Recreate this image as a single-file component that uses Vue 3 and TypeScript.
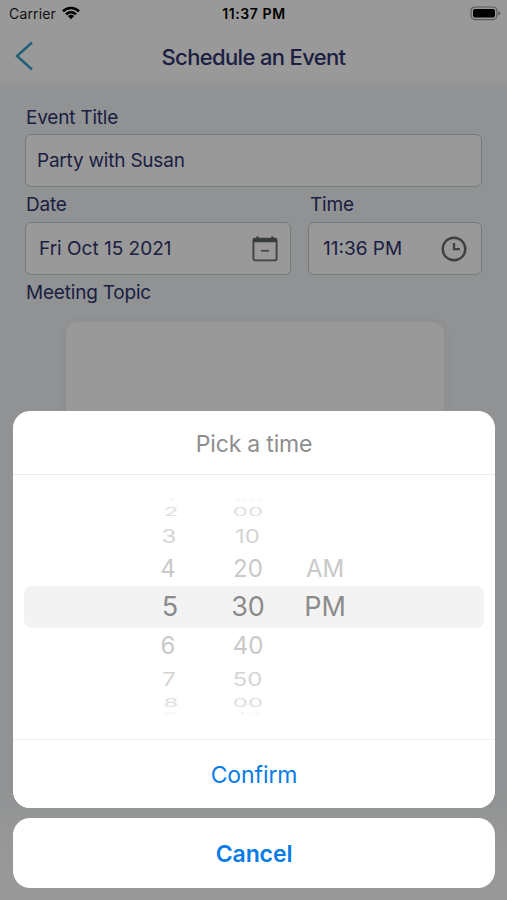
<script setup lang="ts">
import { ref } from 'vue'

interface WheelRow {
  level: string
  hour: string
  minute: string
  period: string
}

const title = ref('Party with Susan')
const date = ref('Fri Oct 15 2021')
const time = ref('11:36 PM')

const rows: WheelRow[] = [
  { level: 'd4', hour: '1', minute: '50', period: '' },
  { level: 'd3', hour: '2', minute: '00', period: '' },
  { level: 'd2', hour: '3', minute: '10', period: '' },
  { level: 'd1', hour: '4', minute: '20', period: 'AM' },
  { level: 'd0', hour: '5', minute: '30', period: 'PM' },
  { level: 'd1', hour: '6', minute: '40', period: '' },
  { level: 'd2', hour: '7', minute: '50', period: '' },
  { level: 'd3', hour: '8', minute: '00', period: '' },
  { level: 'd4', hour: '9', minute: '10', period: '' },
]
</script>

<template>
  <div class="screen">
    <header class="top">
      <div class="status">
        <div class="carrier">
          <span>Carrier</span>
          <svg class="wifi" viewBox="0 0 18 14" width="18" height="14">
            <g fill="none" stroke="#000" stroke-width="2.5">
              <path d="M1 5.3 A11.3 11.3 0 0 1 17 5.3" />
              <path d="M4 8.3 A7.1 7.1 0 0 1 14 8.3" />
            </g>
            <path d="M5.9 10.1 A4.4 4.4 0 0 1 12.1 10.1 L9 13.3Z" fill="#000" />
          </svg>
        </div>
        <div class="clock">11:37 PM</div>
        <svg class="battery" viewBox="0 0 31 15" width="31" height="15">
          <rect x="1" y="1" width="26" height="12.6" rx="4" fill="none" stroke="#000" stroke-opacity=".42" stroke-width="1.2" />
          <rect x="3" y="3" width="22" height="8.6" rx="2" fill="#000" />
          <path d="M28.4 5 Q30.2 6 30.2 7.3 Q30.2 8.6 28.4 9.6Z" fill="#000" fill-opacity=".45" />
        </svg>
      </div>
      <div class="nav">
        <svg class="back" viewBox="0 0 20 30" width="20" height="30">
          <path d="M17 1.5 L2 15 L17 28.5" fill="none" stroke="#3d9fcb" stroke-width="2.5" />
        </svg>
        <h1>Schedule an Event</h1>
        <span />
      </div>
    </header>

    <main class="form">
      <label class="w-title">Event Title</label>
      <div class="field"><span class="v-title">{{ title }}</span></div>
      <div class="pair">
        <div>
          <label class="w-date">Date</label>
          <div class="field inset">
            <span class="v-date">{{ date }}</span>
            <svg class="cal" viewBox="0 0 26 26" width="26" height="26">
              <rect x="1.4" y="2.6" width="23.2" height="21.8" rx="2" fill="none" stroke="#6b7275" stroke-width="1.9" />
              <path d="M1 2.2H25V6.2H1Z M4.4 .4H6.8V3H4.4Z M19.2 .4H21.6V3H19.2Z" fill="#5c6669" />
              <path d="M9 14.8H17" stroke="#7b7b7b" stroke-width="1.8" />
            </svg>
          </div>
        </div>
        <div>
          <label class="w-time">Time</label>
          <div class="field inset time">
            <span class="v-time">{{ time }}</span>
            <svg viewBox="0 0 26 26" width="26" height="26">
              <circle cx="13" cy="13" r="11.3" fill="none" stroke="#686b6d" stroke-width="2.4" />
              <path d="M13 7V13.2H19" fill="none" stroke="#6c6e70" stroke-width="2.3" />
            </svg>
          </div>
        </div>
      </div>
      <label class="w-topic">Meeting Topic</label>
      <div class="topic"></div>
    </main>

    <div class="overlay">
      <section class="sheet">
        <h2><span>Pick a time</span></h2>
        <div class="wheel">
          <div v-for="(row, i) in rows" :key="i" class="row" :class="row.level">
            <span class="hour">{{ row.hour }}</span>
            <span class="minute">{{ row.minute }}</span>
            <span class="period">{{ row.period }}</span>
          </div>
        </div>
        <button class="confirm">Confirm</button>
      </section>
      <button class="cancel">Cancel</button>
    </div>
  </div>
</template>

<style>
body {
  margin: 0;
}
</style>

<style scoped>
* {
  box-sizing: border-box;
}
.screen {
  position: relative;
  width: 507px;
  height: 900px;
  overflow: hidden;
  background: linear-gradient(#f1f4f6 0, #f1f4f6 790px, #fdfdfd 850px);
  color: #30346e;
  font-family: Inter, 'Liberation Sans', sans-serif;
}
.top {
  height: 88px;
  background: linear-gradient(#fff 0, #fff 76px, #f4f6f8 88px);
}
.status {
  display: grid;
  grid-template-columns: 1fr auto 1fr;
  align-items: center;
  height: 27px;
  padding: 0 6px 0 9px;
  color: #000;
  font-size: 14px;
}
.carrier {
  display: flex;
  align-items: center;
  gap: 6px;
  color: #1c1c1c;
  letter-spacing: 0.15px;
}
.wifi {
  margin-top: -2px;
}
.clock {
  padding-right: 2px;
  font-size: 14px;
  font-weight: 600;
  letter-spacing: 0.6px;
}
.battery {
  justify-self: end;
}
.nav {
  display: grid;
  grid-template-columns: 40px 1fr 40px;
  align-items: center;
  height: 58px;
  padding: 0 15px;
}
h1 {
  margin: 2px 0 0;
  font-size: 22px;
  font-weight: 500;
  letter-spacing: -0.65px;
  text-align: center;
  white-space: nowrap;
}
.form {
  padding: 12px 25px 0;
}
label {
  display: block;
  height: 36px;
  padding: 2px 0 0 1px;
  font-size: 19px;
  line-height: 32px;
  letter-spacing: -0.2px;
}
.form > .w-title {
  height: 34px;
}
.field {
  display: flex;
  align-items: center;
  justify-content: space-between;
  width: 100%;
  height: 53px;
  padding: 0 11px;
  border: 1.5px solid #c1cbcf;
  border-radius: 6px;
  background: #fff;
  font-size: 19px;
  white-space: nowrap;
}
.v-title {
  letter-spacing: -0.22px;
}
.inset {
  padding: 0 12px 0 13px;
}
.time {
  padding: 0 14px;
}
.pair {
  display: grid;
  grid-template-columns: 266px 174px;
  justify-content: space-between;
}
.pair label {
  height: 35px;
}
.pair .w-time {
  padding-left: 2px;
}
.topic {
  width: 378px;
  height: 400px;
  margin: 11px auto 0;
  border-radius: 12px;
  background: #fff;
  box-shadow: 0 0 16px rgba(0, 0, 0, 0.05);
  transform: translateX(1px);
}
.overlay {
  position: absolute;
  inset: 0;
  display: flex;
  flex-direction: column;
  justify-content: flex-end;
  gap: 10px;
  padding: 0 12px 12px 13px;
  background: rgba(0, 0, 0, 0.4);
}
.sheet {
  height: 397px;
  border-radius: 17px;
  background: #fff;
  overflow: hidden;
}
h2 {
  height: 64px;
  margin: 0;
  border-bottom: 1px solid #ebebeb;
  color: #8e8e8e;
  font-size: 23px;
  font-weight: 400;
  line-height: 66px;
  letter-spacing: -0.2px;
  text-align: center;
}
.wheel {
  height: 264px;
  padding: 22px 11px 0;
}
.row {
  display: grid;
  grid-template-columns: 64px 64px 64px;
  grid-template-rows: 100%;
  column-gap: 13px;
  align-items: center;
  padding-left: 114px;
  color: #c9c9c9;
  font-size: 24px;
  line-height: 30px;
  text-align: center;
}
.row span {
  height: 30px;
}
.row .minute,
.row .period {
  transform: translateX(1px);
}
.row.d0 {
  height: 42px;
  border-radius: 8px;
  background: #f3f3f3;
  color: #8b8b8b;
  font-size: 27px;
}
.d1 {
  height: 35px;
}
.d1 .hour {
  transform: translateX(-2px);
}
.row.d2 {
  height: 31px;
  color: #d4d4d4;
}
.row.d2 span {
  transform: translate(0.5px, 0.5px) scaleY(0.77);
}
.row.d2 .hour {
  transform: translate(-1px, 0.5px) scaleY(0.77);
}
.row.d3 {
  height: 17px;
  color: #e0e0e0;
}
.row.d3 span {
  transform: translateX(1px) scaleY(0.48);
}
.row.d4 {
  height: 6px;
  color: #f5f5f5;
}
.row.d4 span {
  transform: translateX(1px) scaleY(0.16);
}
button {
  display: block;
  width: 100%;
  margin: 0;
  padding: 0;
  border: 0;
  background: #fff;
  color: #087be5;
  font: 400 23px Inter, 'Liberation Sans', sans-serif;
  letter-spacing: -0.1px;
}
.confirm {
  height: 69px;
  padding-top: 1px;
  border-top: 1px solid #efefef;
}
.cancel {
  height: 70px;
  padding-top: 1px;
  border-radius: 17px;
  font-weight: 600;
}
</style>
